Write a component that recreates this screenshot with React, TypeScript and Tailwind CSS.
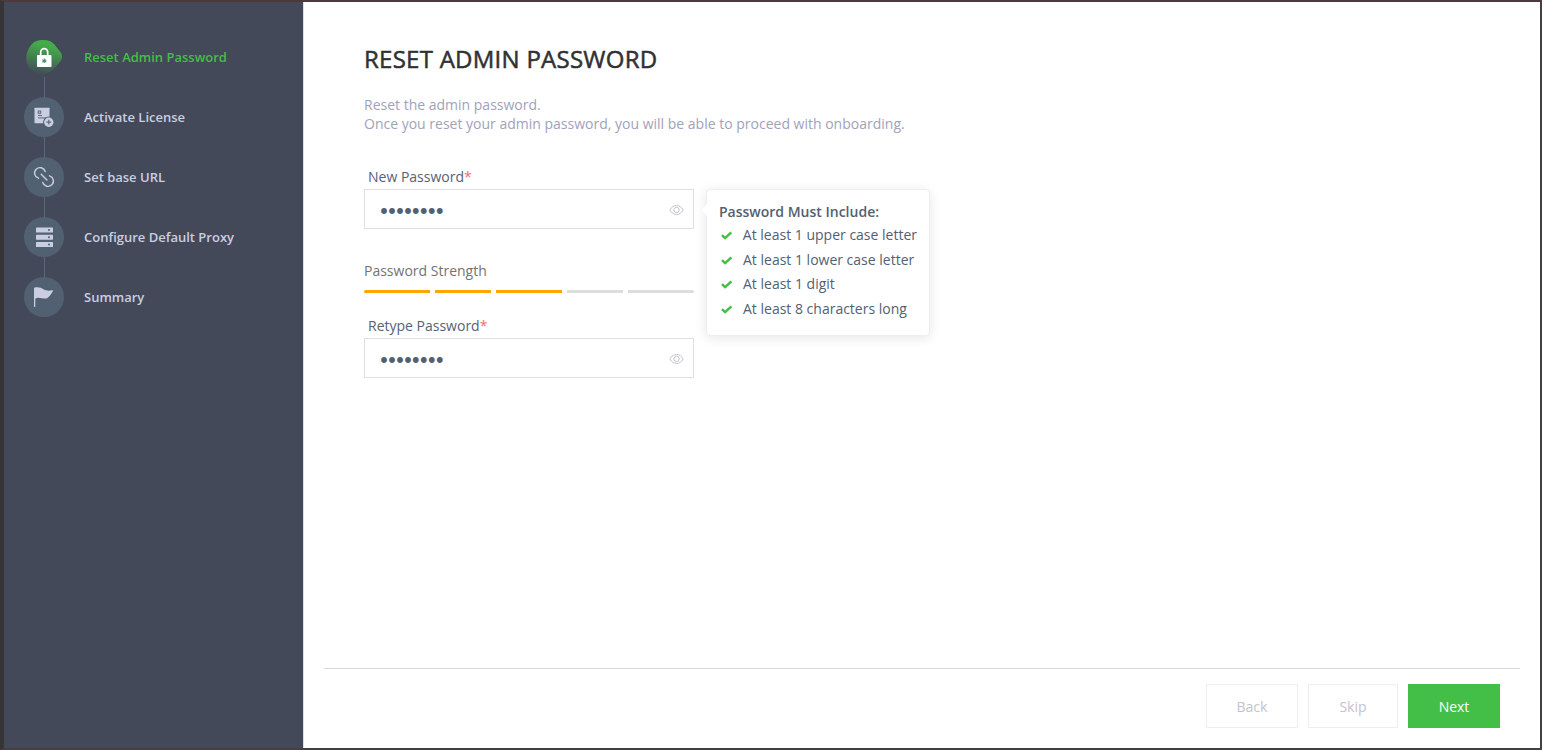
import { useState } from "react";

const LockIcon = () => (
  <svg width="40" height="40" viewBox="0 0 40 40" fill="none">
    <defs>
      <linearGradient id="active-step" x1="24" y1="3" x2="16" y2="38" gradientUnits="userSpaceOnUse">
        <stop offset="0.15" stopColor="#43be46" stopOpacity="0.85" />
        <stop offset="1" stopColor="#43be46" stopOpacity="0" />
      </linearGradient>
    </defs>
    <path
      d="M17.500 3c6-.3 10 1 13 4.500 2 2.300 3.500 4.500 5.500 7 2.700 3.500 2.800 6.500.5 9.500-4 6-9.500 11.500-16.500 13C14 38 8 36 5 31 2 26 1.300 20 3.500 14.500 6.500 7 10.500 3.400 17.500 3Z"
      fill="url(#active-step)"
    />
    <path d="M16.700 18.500v-3.300a3.500 3.500 0 0 1 7 0v3.300" stroke="#fff" strokeWidth="1.700" />
    <rect x="13" y="18" width="14.500" height="12" rx="0.800" fill="#fff" />
    <path d="M20.300 21.500v4.600M18.300 22.700l4 2.200M22.300 22.700l-4 2.200" stroke="#4a8f70" strokeWidth="1.100" />
  </svg>
);

const LicenseIcon = () => (
  <svg width="40" height="40" viewBox="0 0 40 40" fill="none">
    <rect x="10.500" y="10.700" width="15" height="15.500" rx="0.500" fill="#cacee1" />
    <rect x="14.200" y="14" width="2.500" height="2.300" stroke="#5d6685" strokeWidth="1" />
    <path d="M14 18.500h4M14 20.900h8" stroke="#5d6685" strokeWidth="1" />
    <circle cx="24.800" cy="25.200" r="5.700" fill="#526172" />
    <circle cx="24.800" cy="25.200" r="4.700" fill="#cacee1" />
    <path d="M24.800 22.800v4.800M22.400 25.200h4.800" stroke="#626c86" strokeWidth="1.200" />
  </svg>
);

const LinkIcon = () => (
  <svg width="40" height="40" viewBox="0 0 40 40" fill="none" stroke="#cacee1" strokeWidth="1.400" strokeLinecap="round">
    <path d="M14.500 21.200a5.400 5.400 0 1 1 6.700-6.700" />
    <path d="M25.500 18.800a5.400 5.400 0 1 1-6.700 6.700" />
    <path d="M17.200 17.200l5.700 5.700" />
  </svg>
);

const ServerIcon = () => (
  <svg width="40" height="40" viewBox="0 0 40 40">
    {[10.5, 17.7, 25].map((y) => (
      <g key={y}>
        <rect x="12" y={y} width="17" height="5" rx="0.600" fill="#cacee1" />
        <circle cx="25" cy={y + 2.5} r="1" fill="#526172" />
      </g>
    ))}
  </svg>
);

const FlagIcon = () => (
  <svg width="40" height="40" viewBox="0 0 40 40">
    <path
      d="M10 11.200c0-.4.300-.700.700-.700 4.300-.700 6.300.300 8.800 1.800 3 1.700 5.500 1.600 9.300.900.300 0 .5.200.3.500-1.500 2-2.700 5.300-5.600 7.300-3.500 1.700-8.500-1.700-12.200.4v8.200c0 .3-.2.500-.5.500h-.300c-.3 0-.5-.2-.5-.5Z"
      fill="#cacee1"
    />
  </svg>
);

const EyeIcon = () => (
  <svg width="16" height="16" viewBox="0 0 16 16" fill="none" stroke="#c0c4cc">
    <path d="M1.800 8C3.500 5 5.800 3.500 8.500 3.500S13.500 5 15.200 8C13.500 11 11.200 12.500 8.500 12.500S3.500 11 1.800 8Z" />
    <circle cx="8.500" cy="8" r="2.700" />
  </svg>
);

const CheckIcon = () => (
  <svg width="12" height="10" viewBox="0 0 12 10" fill="none">
    <path d="M1 5.200l3.100 2.900 6.300-5.700" stroke="#43be46" strokeWidth="2.500" />
  </svg>
);

const steps = [
  { name: "Reset Admin Password", icon: LockIcon },
  { name: "Activate License", icon: LicenseIcon },
  { name: "Set base URL", icon: LinkIcon },
  { name: "Configure Default Proxy", icon: ServerIcon },
  { name: "Summary", icon: FlagIcon },
];

const rules = [
  "At least 1 upper case letter",
  "At least 1 lower case letter",
  "At least 1 digit",
  "At least 8 characters long",
];

type PasswordFieldProps = {
  label: string;
  value: string;
  onChange: (value: string) => void;
};

const PasswordField = ({ label, value, onChange }: PasswordFieldProps) => {
  const [visible, setVisible] = useState(false);

  return (
    <label className="block">
      <span className="block h-[22px] pl-1 leading-5 text-[#556274]">
        {label}
        <span className="text-[#f56c6c]">*</span>
      </span>
      <span className="flex h-10 items-center border border-[#dcdfe6] pl-[15px] pr-[9px]">
        <input
          type={visible ? "text" : "password"}
          value={value}
          onChange={(e) => onChange(e.target.value)}
          className="min-w-0 flex-1 pt-[5px] font-['DejaVu_Sans',sans-serif] text-[13.500px] text-[#526172] outline-none [-webkit-text-stroke:1.900px_#526172]"
        />
        <button type="button" className="pt-0.5" onClick={() => setVisible(!visible)}>
          <EyeIcon />
        </button>
      </span>
    </label>
  );
};

export default function App() {
  const [password, setPassword] = useState("Passw0rd");
  const [retyped, setRetyped] = useState("Passw0rd");

  return (
    <div className="h-[750px] w-[1542px] border-y-2 border-l-4 border-r-2 border-b-[#454040] border-l-[#353535] border-r-[#414141] border-t-[#4a3a3c] bg-white font-['Open_Sans',sans-serif] text-sm">
      <div className="flex h-full">
        {/* Steps */}
        <aside className="w-[300px] border-r border-[#dcdfe6] bg-[#434959] px-5 pt-[35px]">
          <ul>
            {steps.map(({ name, icon: Icon }, index) => (
              <li key={name} className="flex gap-5">
                <div className="flex h-[60px] w-10 flex-col items-center">
                  <div className={index === 0 ? "h-10 w-10" : "h-10 w-10 rounded-full bg-[#526172]"}>
                    <Icon />
                  </div>
                  {index < steps.length - 1 && <div className="h-5 w-px bg-[#5a6879]"></div>}
                </div>
                <span
                  className={`text-[13px] font-semibold leading-10 ${
                    index === 0 ? "text-[#43be46]" : "text-[#cacee1]"
                  }`}
                >
                  {name}
                </span>
              </li>
            ))}
          </ul>
        </aside>

        <div className="flex flex-1 flex-col px-5">
          <main className="flex-1 px-10 pt-10">
            <h1 className="text-2xl leading-[34px] tracking-[0.260px] text-[#303133] [-webkit-text-stroke:0.500px_#303133]">
              RESET ADMIN PASSWORD
            </h1>
            <p className="mt-[19px] leading-[19px] text-[#9fa2ba]">
              Reset the admin password.
              <br />
              Once you reset your admin password, you will be able to proceed with onboarding.
            </p>

            <div className="mt-[34px] flex items-start gap-3">
              <form className="w-[330px]">
                <PasswordField label="New Password" value={password} onChange={setPassword} />
                <div className="mb-[23px] mt-8">
                  <p className="leading-5 text-[#737373]">Password Strength</p>
                  <div className="mt-[9px] grid h-[3px] grid-cols-[66px_56px_66px_56px_66px] gap-[5px]">
                    <div className="rounded-l-sm bg-[#ffa500]"></div>
                    <div className="bg-[#ffa500]"></div>
                    <div className="bg-[#ffa500]"></div>
                    <div className="bg-[#dddddd]"></div>
                    <div className="rounded-r-sm bg-[#dddddd]"></div>
                  </div>
                </div>
                <PasswordField label="Retype Password" value={retyped} onChange={setRetyped} />
              </form>

              {/* Password rules */}
              <div className="relative mt-[22px] h-[147px] w-[224px] rounded border border-[#ebeef5] bg-white px-3 pt-[11px] text-[#526172] shadow-[0_2px_12px_0_rgba(0,0,0,0.1)]">
                <div className="absolute -left-[5px] top-[14px] h-0 w-0 border-y-[6px] border-r-[5px] border-y-transparent border-r-white"></div>
                <h2 className="font-semibold leading-[22px]">Password Must Include:</h2>
                <ul>
                  {rules.map((rule) => (
                    <li key={rule} className="flex h-[24.600px] items-center gap-[10px] whitespace-nowrap pl-0.5">
                      <CheckIcon />
                      {rule}
                    </li>
                  ))}
                </ul>
              </div>
            </div>
          </main>

          <footer className="flex h-20 justify-end gap-[10px] border-t border-[#d8d9dc] pr-5 pt-[15px]">
            <button className="h-11 w-[92px] border border-[#ebeef5] pt-0.5 text-[#c0c4cc]">Back</button>
            <button className="h-11 w-[90px] border border-[#ebeef5] pt-0.5 text-[#c0c4cc]">Skip</button>
            <button className="h-11 w-[92px] bg-[#43be46] pt-0.5 text-white">Next</button>
          </footer>
        </div>
      </div>
    </div>
  );
}
